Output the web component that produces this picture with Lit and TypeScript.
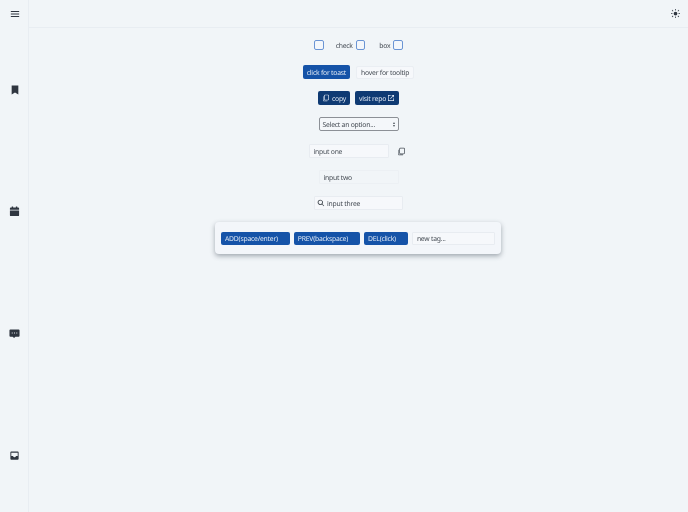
import { LitElement, html, css, svg } from "lit";
import { customElement } from "lit/decorators.js";

const icon = (d: string, size = 9) => html`<svg width=${size} height=${size} viewBox="0 0 24 24" fill="currentColor">${svg`<path d=${d}></path>`}</svg>`;
const I = {
  menu: "M2 5h20v2H2zM2 11h20v2H2zM2 17h20v2H2z",
  bookmark: "M4 1h16v22l-8-5-8 5z",
  calendar: "M6 1h3v2h6V1h3v2h2a2 2 0 0 1 2 2v15a2 2 0 0 1-2 2H4a2 2 0 0 1-2-2V5a2 2 0 0 1 2-2h2zM2 8v2h20V8z",
  chat: "M3 3h18a2 2 0 0 1 2 2v12a2 2 0 0 1-2 2h-7l-3 3-3-3H3a2 2 0 0 1-2-2V5a2 2 0 0 1 2-2zm3 7v2h2v-2zm5 0v2h2v-2zm5 0v2h2v-2z",
  inbox: "M5 3h14a2 2 0 0 1 2 2v14a2 2 0 0 1-2 2H5a2 2 0 0 1-2-2V5a2 2 0 0 1 2-2zm0 10h4a3 3 0 0 0 6 0h4V6H5z",
  sun: "M12 7a5 5 0 1 1 0 10 5 5 0 0 1 0-10zM11 0h2v4h-2zM11 20h2v4h-2zM0 11h4v2H0zM20 11h4v2h-4zM3.5 2.1l2.9 2.9L5 6.4 2.1 3.5zM19 17.6l2.9 2.9-1.4 1.4-2.9-2.9zM2.1 20.5 5 17.6 6.4 19l-2.9 2.9zM17.6 5l2.9-2.9 1.4 1.4L19 6.4z",
  copy: "M9 2h9a3 3 0 0 1 3 3v11a3 3 0 0 1-3 3H9a3 3 0 0 1-3-3V5a3 3 0 0 1 3-3zm0 2a1 1 0 0 0-1 1v11a1 1 0 0 0 1 1h9a1 1 0 0 0 1-1V5a1 1 0 0 0-1-1zM3 7h1.500v12a1 1 0 0 0 1 1H16v2H5a3 3 0 0 1-2-2.800z",
  ext: "M3 3h8v2H5v14h14v-6h2v8H3zM14 3h7v7h-2V6.400l-8.300 8.300-1.400-1.400L17.600 5H14z",
  search: "M10 2a8 8 0 0 1 6.300 12.900l5.400 5.400-1.400 1.400-5.400-5.400A8 8 0 1 1 10 2zm0 2.500a5.500 5.500 0 1 0 0 11 5.500 5.500 0 0 0 0-11z",
};

@customElement("app-root")
export class AppRoot extends LitElement {
  static styles = css`
    :host {
      display: grid;
      grid-template-columns: 28px 1fr;
      grid-template-rows: 28px 1fr;
      width: 688px;
      height: 512px;
      overflow: hidden;
      background: #f1f5f8;
      color: #444b53;
      font-family: "Noto Sans", "Open Sans", sans-serif;
      font-size: 6.8px;
      letter-spacing: -0.22px;
      text-rendering: geometricPrecision;
      filter: blur(0.3px);
    }
    svg { display: block; flex: none; }
    .corner { display: flex; align-items: center; justify-content: center; color: #2f3640; padding-left: 1px; }
    .top {
      display: flex; align-items: center; justify-content: flex-end;
      padding-right: 8px; color: #2f3640;
      border-left: 1px solid #e8edf2; border-bottom: 1px solid #e8edf2;
    }
    .side {
      height: 488px; padding: 1px 0 0 1px;
      display: flex; flex-direction: column; justify-content: space-around; align-items: center;
      color: #2f3640;
    }
    main {
      border-left: 1px solid #e8edf2;
      display: flex; flex-direction: column; align-items: center;
      padding-top: 12px;
    }
    .row { display: flex; align-items: center; justify-content: center; height: 14px; }
    .checks { height: 10px; margin-bottom: 15px; gap: 12px; }
    .check-item { display: flex; align-items: center; gap: 3px; }
    .check-item + .check-item { margin-left: 2px; }
    .box { width: 9.500px; height: 9.500px; box-sizing: border-box; border: 1.300px solid #6b95d4; border-radius: 2px; background: #f4f7fb; }
    .buttons { gap: 6px; margin-bottom: 12px; }
    .tight { gap: 5px; }
    .btn {
      display: flex; align-items: center; gap: 2px; height: 100%; box-sizing: border-box;
      padding: 0 4px; border-radius: 2px; white-space: nowrap; color: #dfe8f4;
    }
    .blue { background: #1553a8; }
    .navy { background: #0f3a73; }
    .narrow { gap: 1px; }
    .ghost { background: #f6f8fb; color: #444b53; border: 1px solid #eaeef3; height: 13px; }
    .select {
      width: 80px; height: 14px; box-sizing: border-box; border: 1px solid #8c9096; border-radius: 2px;
      display: flex; align-items: center; justify-content: space-between; padding: 0 3px;
      background: #f4f7fa; margin-bottom: 13px;
    }
    .carets { display: flex; flex-direction: column; gap: 1px; }
    .carets i { display: block; width: 0; height: 0; border-left: 1.500px solid transparent; border-right: 1.500px solid transparent; }
    .up { border-bottom: 2px solid #4a5159; }
    .down { border-top: 2px solid #4a5159; }
    .input {
      height: 14px; box-sizing: border-box; background: #f6f8fb; border: 1px solid #e8ecf1;
      display: flex; align-items: center; padding: 0 4px; border-radius: 1px;
    }
    .one { width: 80px; }
    .copy-row { margin-bottom: 12px; gap: 8px; color: #4a5159; padding-right: 3px; }
    .two { width: 80px; background: transparent; border-color: #ecf0f4; margin-bottom: 12px; }
    .three { width: 89px; gap: 2px; margin-bottom: 12px; padding-left: 2px; }
    .card {
      display: flex; align-items: center; gap: 4px;
      width: 286px; box-sizing: border-box; height: 32px; padding: 0 6px; border-radius: 4px;
      margin-right: 1px;
      background: #f3f6fa; box-shadow: 0 2px 5px rgba(60, 70, 85, .45);
    }
    .card .btn { height: 13px; flex: none; padding: 0 12px 0 4px; }
    .card .input { height: 13px; flex: 1; }
  `;

  render() {
    return html`
      <div class="corner">${icon(I.menu, 10)}</div>
      <header class="top">${icon(I.sun, 9)}</header>
      <nav class="side">
        ${icon(I.bookmark, 10)}${icon(I.calendar, 11)}${icon(I.chat, 11)}${icon(I.inbox, 11)}
      </nav>
      <main>
        <div class="row checks">
          <div class="box"></div>
          <div class="check-item"><span>check</span><div class="box"></div></div>
          <div class="check-item"><span>box</span><div class="box"></div></div>
        </div>
        <div class="row buttons">
          <div class="btn blue">click for toast</div>
          <div class="btn ghost">hover for tooltip</div>
        </div>
        <div class="row buttons tight">
          <div class="btn navy">${icon(I.copy, 8)}copy</div>
          <div class="btn navy narrow">visit repo ${icon(I.ext, 8)}</div>
        </div>
        <div class="select"><span>Select an option...</span><span class="carets"><i class="up"></i><i class="down"></i></span></div>
        <div class="row copy-row">
          <div class="input one">input one</div>
          ${icon(I.copy, 9)}
        </div>
        <div class="input two">input two</div>
        <div class="input three">${icon(I.search, 8)}<span>input three</span></div>
        <div class="card">
          <div class="btn blue">ADD(space/enter)</div>
          <div class="btn blue">PREV(backspace)</div>
          <div class="btn blue">DEL(click)</div>
          <div class="input">new tag...</div>
        </div>
      </main>
    `;
  }
}
